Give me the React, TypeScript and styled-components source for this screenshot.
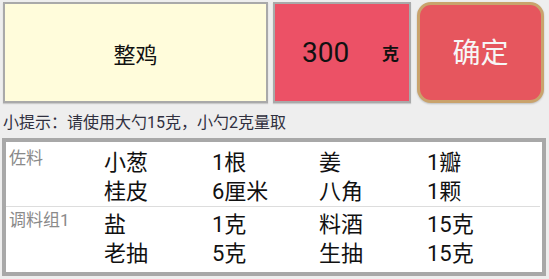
import { Fragment } from "react";
import styled, { createGlobalStyle } from "styled-components";

const GlobalStyle = createGlobalStyle`
  html, body {
    margin: 0;
    padding: 0;
    background: #eeeeee;
    font-family: Roboto, "Noto Sans CJK SC", sans-serif;
  }
`;

interface Item {
  name: string;
  amount: string;
}
interface Group {
  label: string;
  items: Item[];
}

const groups: Group[] = [
  {
    label: "佐料",
    items: [
      { name: "小葱", amount: "1根" },
      { name: "姜", amount: "1瓣" },
      { name: "桂皮", amount: "6厘米" },
      { name: "八角", amount: "1颗" },
    ],
  },
  {
    label: "调料组1",
    items: [
      { name: "盐", amount: "1克" },
      { name: "料酒", amount: "15克" },
      { name: "老抽", amount: "5克" },
      { name: "生抽", amount: "15克" },
    ],
  },
];

function App() {
  return (
    <Page>
      <GlobalStyle />
      <TopRow>
        <NameBox>整鸡</NameBox>
        <WeightBox>
          <WeightValue>300</WeightValue>
          <WeightUnit>克</WeightUnit>
        </WeightBox>
        <ConfirmButton>确定</ConfirmButton>
      </TopRow>
      <Hint>小提示：请使用大勺15克，小勺2克量取</Hint>
      <Table>
        {groups.map((g, i) => (
          <GroupRow key={g.label} $first={i === 0}>
            <GroupLabel>{g.label}</GroupLabel>
            <ItemGrid>
              {g.items.map((it) => (
                <Fragment key={it.name}>
                  <Cell>{it.name}</Cell>
                  <Cell>{it.amount}</Cell>
                </Fragment>
              ))}
            </ItemGrid>
          </GroupRow>
        ))}
      </Table>
    </Page>
  );
}

const Page = styled.div`
  width: 549px;
  height: 279px;
  padding: 0 3px 0 2px;
  box-sizing: border-box;
  overflow: hidden;
`;

const TopRow = styled.div`
  display: flex;
  gap: 5px;
  margin-top: 2px;
  height: 101px;
  padding-left: 1px;
`;

const NameBox = styled.div`
  width: 265px;
  box-sizing: border-box;
  border: 2px solid #a9a9a9;
  background: #fffcdb;
  display: flex;
  align-items: center;
  justify-content: center;
  font-size: 22px;
  color: #111;
  box-shadow: 0 1px 1px rgba(0, 0, 0, 0.15);
`;

const WeightBox = styled.div`
  width: 138px;
  box-sizing: border-box;
  border: 2px solid #a9a9a9;
  background: #ec5166;
  display: flex;
  align-items: center;
  justify-content: space-between;
  padding: 0 10px 0 27px;
  color: #111;
  box-shadow: 0 1px 1px rgba(0, 0, 0, 0.15);
`;

const WeightValue = styled.span`
  font-size: 28px;
`;

const WeightUnit = styled.span`
  font-size: 17px;
  font-weight: bold;
`;

const ConfirmButton = styled.button`
  width: 127px;
  margin-left: 1px;
  box-sizing: border-box;
  border: 3px solid #c9a36c;
  border-radius: 14px;
  background: #e6565e;
  color: #f6f6f6;
  font-family: Roboto, "Noto Sans CJK SC", sans-serif;
  font-size: 28px;
  padding: 0 0 4px;
  box-shadow: 0 1px 2px rgba(0, 0, 0, 0.2);
`;

const Hint = styled.div`
  margin-top: 5px;
  height: 30px;
  line-height: 30px;
  padding-left: 1px;
  font-size: 16px;
  color: #30303f;
`;

const Table = styled.div`
  border: 4px solid #a8a8a8;
  background: #ffffff;
  padding-bottom: 4px;
`;

const GroupRow = styled.div<{ $first: boolean }>`
  display: flex;
  padding-top: ${(p) => (p.$first ? "6px" : "3px")};
  border-top: ${(p) => (p.$first ? "none" : "1px solid #dddddd")};
  margin: 0 2px 0 0;
`;

const GroupLabel = styled.div`
  width: 95px;
  padding-left: 3px;
  font-size: 17px;
  line-height: 20px;
  color: #8a8a8a;
`;

const ItemGrid = styled.div`
  display: grid;
  grid-template-columns: 108px 107px 108px 1fr;
  grid-auto-rows: 29px;
  align-items: center;
`;

const Cell = styled.div`
  font-size: 22px;
  line-height: 29px;
  color: #111;
  white-space: nowrap;
`;

export default App;
